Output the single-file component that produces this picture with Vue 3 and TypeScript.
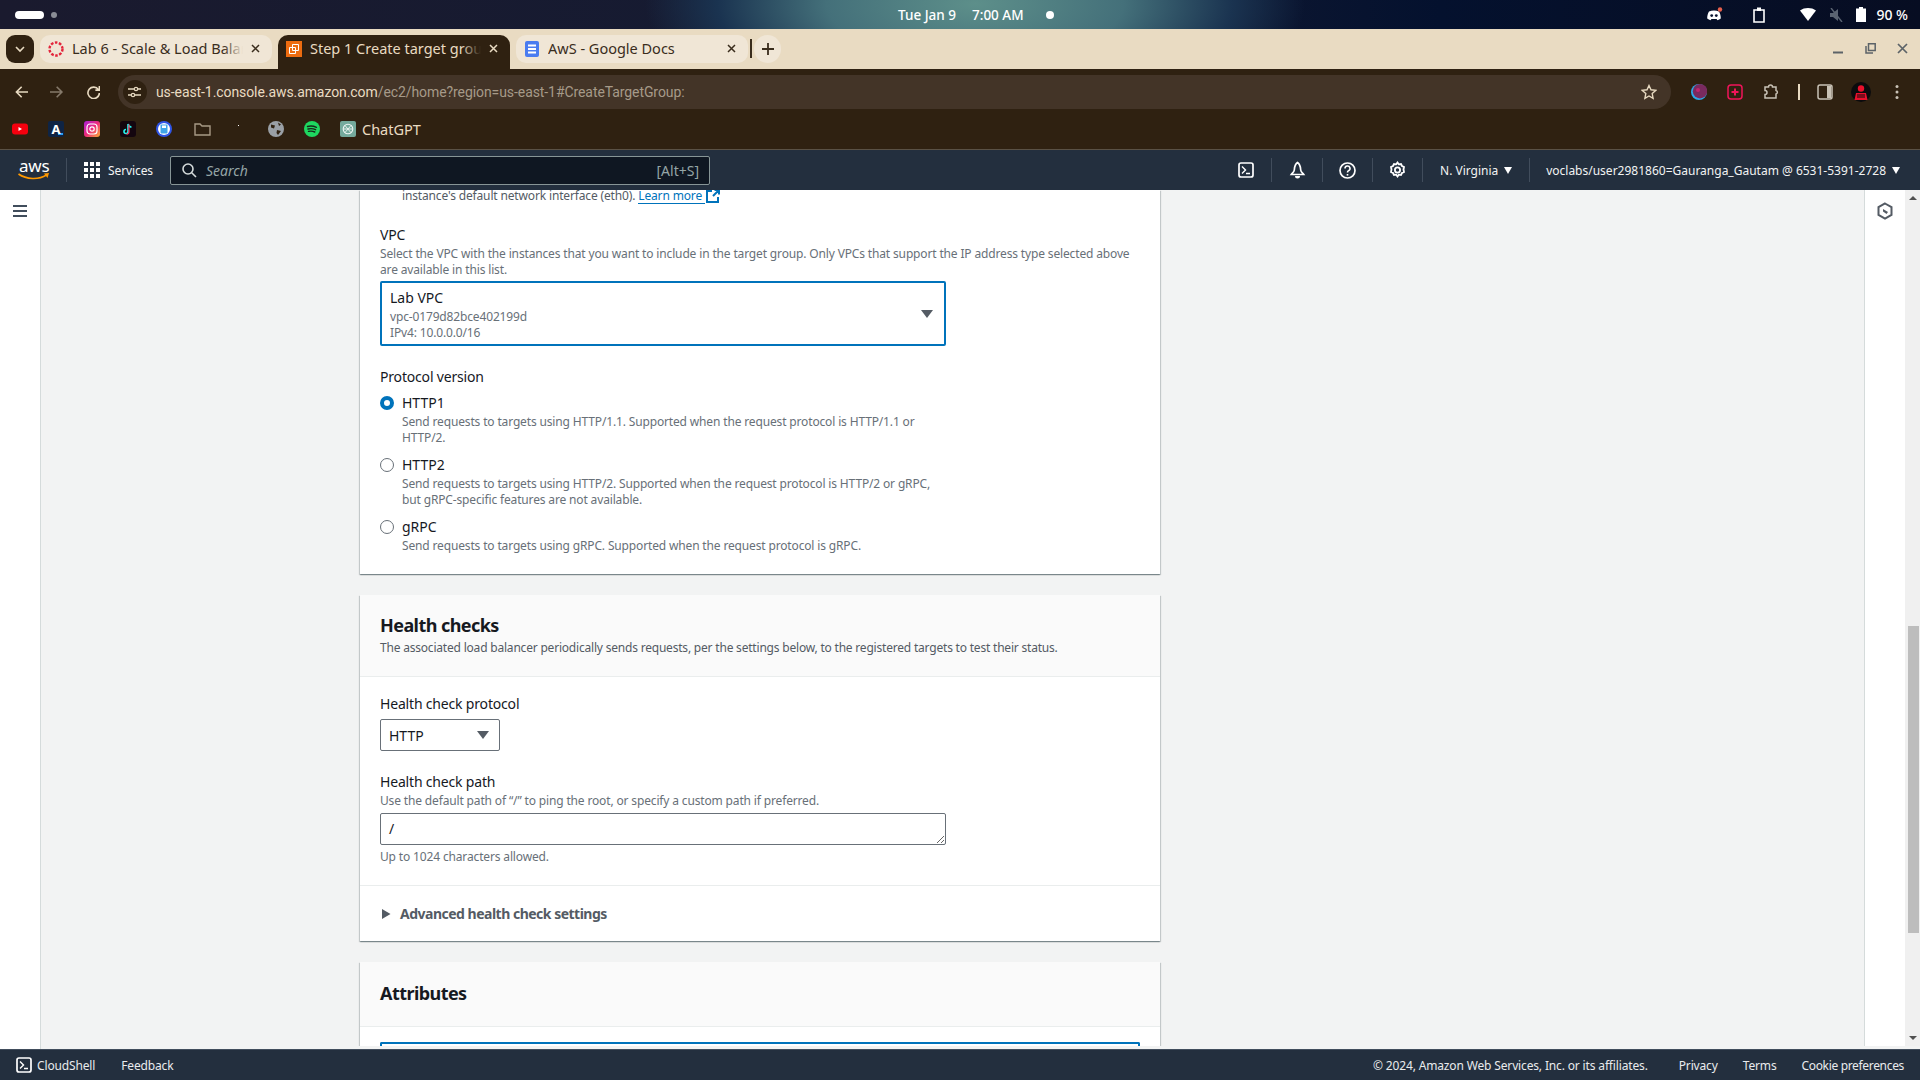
<script setup lang="ts">
const tabs = [
  { title: "Lab 6 - Scale & Load Balancing", icon: "canvas", active: false },
  { title: "Step 1 Create target group", icon: "ec2", active: true },
  { title: "AwS - Google Docs", icon: "docs", active: false },
];

const hints = {
  http1: "Send requests to targets using HTTP/1.1. Supported when the request protocol is HTTP/1.1 or HTTP/2.",
  http2: "Send requests to targets using HTTP/2. Supported when the request protocol is HTTP/2 or gRPC, but gRPC-specific features are not available.",
  grpc: "Send requests to targets using gRPC. Supported when the request protocol is gRPC.",
};

const protocols = [
  { name: "HTTP1", hint: hints.http1, checked: true },
  { name: "HTTP2", hint: hints.http2, checked: false },
  { name: "gRPC", hint: hints.grpc, checked: false },
];
</script>

<template>
  <div class="screen">
    <div class="os-bar">
      <div class="os-left">
        <span class="pill"></span>
        <span class="pill-dot"></span>
      </div>
      <div class="os-clock">
        <span>Tue Jan 9</span>
        <span>7:00 AM</span>
        <span class="clock-dot"></span>
      </div>
      <div class="os-right">
        <svg class="os-discord" width="18" height="16" viewBox="0 0 18 16">
          <path fill="#fff" d="M4 4.500c3-1.300 7-1.300 10 0 1.200 2 1.800 4.400 1.800 7-1 .9-2.200 1.400-3.400 1.700l-.8-1.300H6.400l-.8 1.300C4.400 12.900 3.200 12.400 2.200 11.500c0-2.600.6-5 1.800-7z" />
          <circle cx="6.700" cy="8.600" r="1.400" fill="#0b1430" />
          <circle cx="11.300" cy="8.600" r="1.400" fill="#0b1430" />
          <circle cx="15" cy="2.500" r="2.200" fill="#e8604c" />
        </svg>
        <svg class="os-clip" width="12" height="16" viewBox="0 0 12 16">
          <path fill="none" stroke="#fff" stroke-width="1.600" d="M1 3h10v12H1z" />
          <path fill="#fff" d="M4 .5h4V4H4z" />
        </svg>
        <svg class="os-wifi" width="16" height="13" viewBox="0 0 16 13">
          <path fill="#fff" d="M0 2.500C4.500-.8 11.500-.8 16 2.500L8 13z" />
        </svg>
        <svg class="os-mute" width="16" height="14" viewBox="0 0 16 14">
          <path fill="#5b6472" d="M2 5h3l5-4v12l-5-4H2z" />
          <path stroke="#5b6472" stroke-width="1.400" d="M3 0l11 14" />
        </svg>
        <svg class="os-batt" width="10" height="15" viewBox="0 0 10 15">
          <path fill="#fff" d="M3 0h4v1.500h3V15H0V1.500h3z" />
        </svg>
        <span class="os-pct">90 %</span>
      </div>
    </div>

    <div class="tab-strip">
      <div class="tab-search">
        <svg width="10" height="7" viewBox="0 0 10 7"><path fill="none" stroke="#e8dac1" stroke-width="1.600" d="M1 1l4 4 4-4" /></svg>
      </div>
      <div v-for="tab in tabs" :key="tab.title" class="tab" :class="{ active: tab.active }">
        <svg v-if="tab.icon === 'canvas'" class="favicon" width="16" height="16" viewBox="0 0 16 16">
          <circle cx="8" cy="8" r="6.500" fill="none" stroke="#e3243b" stroke-width="2.400" stroke-dasharray="2.600 1.500" />
        </svg>
        <svg v-else-if="tab.icon === 'ec2'" class="favicon" width="16" height="16" viewBox="0 0 16 16">
          <rect width="16" height="16" fill="#ed6c10" />
          <path fill="none" stroke="#fff" stroke-width="1" d="M6.500 3.500h6v6h-6zM3.500 6.500h6v6h-6z" />
        </svg>
        <svg v-else class="favicon" width="16" height="16" viewBox="0 0 16 16">
          <rect x="1" width="14" height="16" rx="2" fill="#4a7cf0" />
          <path stroke="#fff" stroke-width="1.800" d="M4 4.500h8M4 8h8M4 11.500h8" />
        </svg>
        <span class="tab-title">{{ tab.title }}</span>
        <span class="tab-fade"></span>
        <svg class="tab-close" width="9" height="9" viewBox="0 0 9 9">
          <path stroke="currentColor" stroke-width="1.500" d="M1 1l7 7M8 1L1 8" />
        </svg>
      </div>
      <span class="tab-sep"></span>
      <div class="tab-new">
        <svg width="12" height="12" viewBox="0 0 12 12"><path stroke="#3a2d1d" stroke-width="1.800" d="M6 0v12M0 6h12" /></svg>
      </div>
      <div class="window-btns">
        <svg width="11" height="11" viewBox="0 0 11 11"><path stroke="#5c6368" stroke-width="2" d="M0 9.500h10" /></svg>
        <svg width="11" height="11" viewBox="0 0 11 11"><path fill="none" stroke="#5c6368" stroke-width="1.500" d="M1 3v7h7M3.500.8h6.700v6.700H3.500z" /></svg>
        <svg width="11" height="11" viewBox="0 0 11 11"><path stroke="#5c6368" stroke-width="1.700" d="M1 1l9 9M10 1l-9 9" /></svg>
      </div>
    </div>

    <div class="browser-top">
      <div class="toolbar">
        <svg class="tb-back" width="14" height="14" viewBox="0 0 14 14"><path fill="none" stroke="#e8dac1" stroke-width="1.700" d="M14 7H2M7 1.500L1.500 7 7 12.500" /></svg>
        <svg class="tb-fwd" width="14" height="14" viewBox="0 0 14 14"><path fill="none" stroke="#85796a" stroke-width="1.700" d="M0 7h12M7 1.500L12.500 7 7 12.500" /></svg>
        <svg class="tb-reload" width="14" height="14" viewBox="0 0 14 14"><path fill="none" stroke="#e8dac1" stroke-width="1.700" d="M12 4.500A6 6 0 1 0 13 8M13 .8v4.200H8.800" /></svg>
        <div class="omnibox">
          <span class="site-btn">
            <svg width="13" height="12" viewBox="0 0 13 12">
              <path fill="none" stroke="#e8dac1" stroke-width="1.300" d="M0 3h6M10 3h3M0 9h3M7 9h6" />
              <circle cx="8" cy="3" r="1.700" fill="none" stroke="#e8dac1" stroke-width="1.200" />
              <circle cx="5" cy="9" r="1.700" fill="none" stroke="#e8dac1" stroke-width="1.200" />
            </svg>
          </span>
          <span class="url"><b>us-east-1.console.aws.amazon.com</b>/ec2/home?region=us-east-1#CreateTargetGroup:</span>
          <svg class="star" width="16" height="16" viewBox="0 0 16 16"><path fill="none" stroke="#e8dac1" stroke-width="1.400" d="M8 1.500l2 4.300 4.700.6-3.500 3.200.9 4.700L8 12l-4.100 2.300.9-4.700-3.500-3.200L6 5.800z" /></svg>
        </div>
        <div class="tb-exts">
          <svg width="16" height="16" viewBox="0 0 16 16">
            <circle cx="8" cy="8" r="8" fill="#2ea7e8" />
            <circle cx="9" cy="7.200" r="7.200" fill="#7a2a5f" />
            <circle cx="7" cy="6" r="2" fill="#c0246f" />
          </svg>
          <svg width="16" height="16" viewBox="0 0 16 16">
            <rect x="1" y="1" width="14" height="14" rx="3" fill="none" stroke="#f0145a" stroke-width="1.500" />
            <path stroke="#f0145a" stroke-width="2" d="M8 4.500v7M4.500 8h7" />
          </svg>
          <svg width="16" height="16" viewBox="0 0 16 16">
            <path fill="none" stroke="#c9c2b6" stroke-width="1.500" d="M2 3h3.500a2 2 0 0 1 4 0H13v3.500a1.800 1.800 0 0 1 0 3.500V14H2v-3.500a2 2 0 0 0 0-4z" />
          </svg>
          <span class="ext-sep"></span>
          <svg width="16" height="16" viewBox="0 0 16 16">
            <rect x="1" y="1" width="14" height="14" rx="2" fill="none" stroke="#c9c2b6" stroke-width="1.500" />
            <rect x="10" y="2" width="4" height="12" fill="#c9c2b6" />
          </svg>
          <svg class="avatar" width="20" height="20" viewBox="0 0 20 20">
            <circle cx="10" cy="10" r="10" fill="#0b0b0d" />
            <circle cx="10" cy="6.500" r="3.200" fill="#e8102c" />
            <path fill="#e8102c" d="M5 11h10l1.500 7H3.500z" />
            <path stroke="#0b0b0d" d="M6 13h8M6 15h8" />
          </svg>
          <svg width="16" height="16" viewBox="0 0 16 16">
            <circle cx="8" cy="2.500" r="1.500" fill="#c9c2b6" />
            <circle cx="8" cy="8" r="1.500" fill="#c9c2b6" />
            <circle cx="8" cy="13.500" r="1.500" fill="#c9c2b6" />
          </svg>
        </div>
      </div>
      <div class="bookmarks">
        <svg width="16" height="12" viewBox="0 0 16 12">
          <rect width="16" height="11" y=".5" rx="3" fill="#f5000e" />
          <path fill="#fff" d="M6.500 4l3.500 2-3.500 2z" />
        </svg>
        <span class="bm-a">A</span>
        <svg width="16" height="16" viewBox="0 0 16 16">
          <defs>
            <linearGradient id="ig" x1="0" y1="0" x2="1" y2="1">
              <stop offset="0" stop-color="#a81fd8" />
              <stop offset=".5" stop-color="#ee2a7b" />
              <stop offset="1" stop-color="#fbb034" />
            </linearGradient>
          </defs>
          <rect width="16" height="16" rx="3" fill="url(#ig)" />
          <rect x="3" y="3" width="10" height="10" rx="3" fill="none" stroke="#fff" stroke-width="1.200" />
          <circle cx="8" cy="8" r="2.200" fill="none" stroke="#fff" stroke-width="1.200" />
        </svg>
        <svg width="16" height="16" viewBox="0 0 16 16">
          <rect width="16" height="16" rx="3" fill="#14060f" />
          <path fill="none" stroke="#25f4ee" stroke-width="1.600" d="M8 3v7.500a2 2 0 1 1-2-2M8 3c.3 1.800 1.500 3 3.500 3" />
          <path fill="none" stroke="#fe2c55" stroke-width="1.200" d="M9 3.500v7.500a2 2 0 0 1-2.500 2" />
        </svg>
        <svg width="16" height="16" viewBox="0 0 16 16">
          <circle cx="8" cy="8" r="8" fill="#2f55e8" />
          <circle cx="8" cy="8" r="6" fill="#fff" />
          <rect x="4.500" y="3.500" width="7" height="9" rx="1" fill="#3fa5ea" />
          <rect x="6" y="4.500" width="4" height="2.500" fill="#fff" />
        </svg>
        <svg class="bm-folder" width="17" height="14" viewBox="0 0 17 14">
          <path fill="none" stroke="#a89a85" stroke-width="1.400" d="M1 2h5l2 2h8v9H1z" />
        </svg>
        <span class="bm-dot"></span>
        <svg class="bm-globe" width="16" height="16" viewBox="0 0 16 16">
          <circle cx="8" cy="8" r="8" fill="#9aa0a6" />
          <path fill="#2f2111" d="M3 3.500l4 1-1 3-3-1zM9 9l4 1-3 4-1.500-2zM10 1.500l3 2-2 1.500z" />
        </svg>
        <svg width="16" height="16" viewBox="0 0 16 16">
          <circle cx="8" cy="8" r="8" fill="#1ed760" />
          <path fill="none" stroke="#17281a" stroke-width="1.400" stroke-linecap="round" d="M3.500 5.500c3-.9 6-.6 9 .8M4 8c2.600-.7 5.200-.5 7.600.7M4.500 10.400c2.200-.5 4.300-.4 6.300.6" />
        </svg>
        <span class="bm-chat">
          <svg width="16" height="16" viewBox="0 0 16 16">
            <rect width="16" height="16" rx="2" fill="#74aa9c" />
            <circle cx="8" cy="8" r="4.800" fill="none" stroke="#eef5f2" stroke-width="1.100" />
            <path fill="none" stroke="#eef5f2" stroke-width=".9" d="M5 4.500l5.800 7M11 4.500L5 11.500M3.500 8h9" />
          </svg>
          ChatGPT
        </span>
      </div>
    </div>

    <div class="aws-nav">
      <div class="aws-logo">
        <span>aws</span>
        <svg width="32" height="8" viewBox="0 0 32 8">
          <path fill="none" stroke="#f90" stroke-width="1.600" d="M.5 1c8 5.500 20 6 28 1" />
          <path fill="#f90" d="M26 .5l5-.5-1.500 5z" />
        </svg>
      </div>
      <span class="nav-grid">
        <i v-for="n in 9" :key="n"></i>
      </span>
      <span class="nav-services">Services</span>
      <div class="nav-search">
        <svg width="15" height="15" viewBox="0 0 15 15"><path fill="none" stroke="#d5dbdb" stroke-width="1.600" d="M9.700 9.700L14 14M11 6a5 5 0 1 1-10 0 5 5 0 0 1 10 0z" /></svg>
        <em>Search</em>
        <span>[Alt+S]</span>
      </div>
      <div class="nav-right">
        <span class="nav-item first">
          <svg width="16" height="16" viewBox="0 0 16 16">
            <rect x="1" y="1" width="14" height="14" rx="2" fill="none" stroke="#fff" stroke-width="1.700" />
            <path fill="none" stroke="#fff" stroke-width="1.400" d="M4 4.500L7.500 8 4 11.500M8 11.500h4" />
          </svg>
        </span>
        <span class="nav-item wide">
          <svg width="17" height="18" viewBox="0 0 17 18">
            <path fill="none" stroke="#fff" stroke-width="1.700" d="M8.500 1.500c-3 2-3 5-3.200 7.500-.2 2-2 3-3 4.500h12.400c-1-1.500-2.800-2.500-3-4.500-.2-2.500-.2-5.500-3.200-7.500z" />
            <path fill="#fff" d="M6 15h5a2.500 2.500 0 0 1-5 0z" />
          </svg>
        </span>
        <span class="nav-item">
          <svg width="17" height="17" viewBox="0 0 17 17">
            <circle cx="8.500" cy="8.500" r="7.500" fill="none" stroke="#fff" stroke-width="1.700" />
            <path fill="none" stroke="#fff" stroke-width="1.600" d="M6 6.500a2.500 2.500 0 1 1 3.500 2.300c-.7.3-1 .8-1 1.700" />
            <path stroke="#fff" stroke-width="1.600" d="M8.500 12v1.600" />
          </svg>
        </span>
        <span class="nav-item wide2">
          <svg width="17" height="18" viewBox="0 0 17 18">
            <path fill="none" stroke="#fff" stroke-width="1.800" d="M8.500 1.500l1.300 1.800 2.200-.3 1 2 2 1-.5 2.500.5 2.500-2 1-1 2-2.200-.3-1.300 1.800-1.300-1.800-2.200.3-1-2-2-1 .5-2.500-.5-2.500 2-1 1-2 2.200.3z" />
            <circle cx="8.500" cy="9" r="2.600" fill="none" stroke="#fff" stroke-width="1.800" />
          </svg>
        </span>
        <span class="nav-item region">N. Virginia <i class="nav-caret"></i></span>
        <span class="nav-account">voclabs/user2981860=Gauranga_Gautam @ 6531-5391-2728 <i class="nav-caret"></i></span>
      </div>
    </div>

    <div class="body-row">
      <aside class="left-rail">
        <svg width="14" height="12" viewBox="0 0 14 12"><path stroke="#414d5c" stroke-width="2" d="M0 1h14M0 6h14M0 11h14" /></svg>
      </aside>
      <div class="body-col">
        <div class="scroll-row">
          <main class="page">
            <section class="card first-card">
              <div class="card-body">
                <p class="hint indent">instance's default network interface (eth0). <a class="learn">Learn more</a>
                  <svg class="ext" width="14" height="14" viewBox="0 0 14 14"><path fill="none" stroke="#0073bb" stroke-width="2" d="M6 2H1v11h11V8M7 7l5.500-5.500M8.500 1H13v4.500" /></svg>
                </p>
                <div class="label vpc-label">VPC</div>
                <p class="hint">Select the VPC with the instances that you want to include in the target group. Only VPCs that support the IP address type selected above are available in this list.</p>
                <div class="vpc-select">
                  <div>
                    <div class="vpc-name">Lab VPC</div>
                    <div class="hint">vpc-0179d82bce402199d</div>
                    <div class="hint">IPv4: 10.0.0.0/16</div>
                  </div>
                  <i class="caret"></i>
                </div>
                <div class="label proto-label">Protocol version</div>
                <div v-for="p in protocols" :key="p.name" class="radio">
                  <span class="radio-dot" :class="{ checked: p.checked }"></span>
                  <div class="radio-text">
                    <div class="radio-name">{{ p.name }}</div>
                    <p class="hint radio-hint">{{ p.hint }}</p>
                  </div>
                </div>
              </div>
            </section>

            <section class="card">
              <header class="card-head">
                <h2>Health checks</h2>
                <p>The associated load balancer periodically sends requests, per the settings below, to the registered targets to test their status.</p>
              </header>
              <div class="card-body health-body">
                <div class="label">Health check protocol</div>
                <div class="proto-select">HTTP <i class="caret"></i></div>
                <div class="label path-label">Health check path</div>
                <p class="hint">Use the default path of “/” to ping the root, or specify a custom path if preferred.</p>
                <textarea class="path-input" rows="1">/</textarea>
                <p class="hint path-note">Up to 1024 characters allowed.</p>
              </div>
              <div class="advanced">
                <svg width="9" height="10" viewBox="0 0 9 10"><path fill="#545b64" d="M0 0l8.500 5L0 10z" /></svg>
                Advanced health check settings
              </div>
            </section>

            <section class="card">
              <header class="card-head attr-head">
                <h2>Attributes</h2>
              </header>
              <div class="attr-body">
                <div class="attr-box"></div>
              </div>
            </section>
          </main>
          <aside class="right-rail">
            <svg width="16" height="18" viewBox="0 0 16 18">
              <path fill="none" stroke="#545b64" stroke-width="2" d="M8 1.500l6.500 3.700v7.600L8 16.500l-6.500-3.700V5.200z" />
              <path fill="#545b64" d="M6 7l5 3-1.500 2L6 9.500z" />
            </svg>
          </aside>
          <div class="scrollbar">
            <i class="sb-up"></i>
            <span class="sb-thumb"></span>
            <i class="sb-down"></i>
          </div>
        </div>
      </div>
    </div>

    <footer class="foot">
      <svg width="16" height="16" viewBox="0 0 16 16">
        <rect x="1" y="1" width="14" height="14" rx="2" fill="none" stroke="#fff" stroke-width="1.700" />
        <path fill="none" stroke="#fff" stroke-width="1.400" d="M4 4.500L7.500 8 4 11.500M8 11.500h4" />
      </svg>
      <span class="foot-shell">CloudShell</span>
      <span class="foot-feedback">Feedback</span>
      <span class="foot-copy">© 2024, Amazon Web Services, Inc. or its affiliates.</span>
      <span class="foot-link">Privacy</span>
      <span class="foot-link">Terms</span>
      <span class="foot-link foot-cookie">Cookie preferences</span>
    </footer>
  </div>
</template>

<style>
html,
body {
  margin: 0;
  overflow: hidden;
}
</style>

<style scoped>
.screen {
  width: 1920px;
  height: 1080px;
  display: flex;
  flex-direction: column;
  overflow: hidden;
  font-family: "Noto Sans", sans-serif;
  font-size: 14px;
  color: #16191f;
}

.os-bar {
  height: 29px;
  flex: none;
  display: flex;
  align-items: center;
  color: #fff;
  background: radial-gradient(ellipse 330px 130px at 975px 4px, #5d8f8a 0%, #44707a 45%, #1a3350 78%, transparent 100%),
    linear-gradient(90deg, #1a1a2e 0%, #141b33 55%, #04112e 75%, #070d22 100%);
}

.os-left {
  width: 898px;
  display: flex;
  align-items: center;
  padding-left: 15px;
  box-sizing: border-box;
}

.pill {
  width: 29px;
  height: 8px;
  border-radius: 4px;
  background: #fff;
}

.pill-dot {
  width: 6px;
  height: 6px;
  margin-left: 7px;
  border-radius: 50%;
  background: #8a8d96;
}

.os-clock {
  display: flex;
  align-items: center;
  gap: 16px;
  font-size: 13.500px;
  font-weight: 500;
}

.clock-dot {
  width: 8px;
  height: 8px;
  margin-left: 6px;
  border-radius: 50%;
  background: #fff;
}

.os-right {
  margin-left: auto;
  padding-right: 12px;
  display: flex;
  align-items: center;
}

.os-clip {
  margin-left: 30px;
}

.os-wifi {
  margin-left: 35px;
}

.os-mute {
  margin-left: 12px;
}

.os-batt {
  margin-left: 12px;
}

.os-pct {
  margin-left: 10px;
  font-size: 14px;
  font-weight: 500;
}

.tab-strip {
  height: 40px;
  flex: none;
  display: flex;
  align-items: flex-start;
  padding: 6px 0 0 6px;
  box-sizing: border-box;
  background: #e9dbc2;
}

.tab-search {
  width: 28px;
  height: 28px;
  display: flex;
  align-items: center;
  justify-content: center;
  border-radius: 9px;
  background: #2f2111;
}

.tab {
  position: relative;
  width: 232px;
  height: 28px;
  margin-left: 6px;
  display: flex;
  align-items: center;
  padding: 0 10px 1px 8px;
  box-sizing: border-box;
  border-radius: 10px;
  color: #3a2d1d;
  background: #f0e6d6;
}

.tab.active {
  height: 34px;
  padding-bottom: 7px;
  border-radius: 10px 10px 0 0;
  color: #e9dbc2;
  background: #2f2111;
}

.favicon {
  flex: none;
}

.tab-title {
  margin: 0 0 2px 8px;
  flex: 1;
  overflow: hidden;
  white-space: nowrap;
  font-size: 14.500px;
}

.tab-fade {
  width: 20px;
  height: 20px;
  margin-left: -20px;
  flex: none;
  background: linear-gradient(90deg, rgba(240, 230, 214, 0), #f0e6d6);
}

.tab.active .tab-fade {
  background: linear-gradient(90deg, rgba(47, 33, 17, 0), #2f2111);
}

.tab-close {
  flex: none;
  margin-left: 8px;
  margin-right: 2px;
}

.tab-sep {
  width: 2px;
  height: 19px;
  margin: 4px 0 0 2px;
  background: #3a2d1d;
}

.tab-new {
  width: 27px;
  height: 28px;
  margin-left: 2px;
  display: flex;
  align-items: center;
  justify-content: center;
  border-radius: 50%;
  background: #f0e6d6;
}

.window-btns {
  margin-left: auto;
  padding: 8px 12px 0 0;
  display: flex;
  gap: 21px;
}

.browser-top {
  height: 80px;
  flex: none;
  display: flex;
  flex-direction: column;
  background: #2f2111;
}

.toolbar {
  height: 46px;
  display: flex;
  align-items: center;
  padding: 6px 15px;
  box-sizing: border-box;
  flex: none;
}

.tb-fwd {
  margin-left: 22px;
}

.tb-reload {
  margin-left: 23px;
}

.omnibox {
  width: 1553px;
  height: 34px;
  margin-left: 18px;
  flex: none;
  display: flex;
  align-items: center;
  padding: 0 14px 0 5px;
  box-sizing: border-box;
  border-radius: 17px;
  background: #433427;
}

.site-btn {
  width: 24px;
  height: 24px;
  flex: none;
  display: flex;
  align-items: center;
  justify-content: center;
  border-radius: 50%;
  background: #2f2111;
}

.url {
  margin-left: 9px;
  font-family: Roboto, sans-serif;
  font-size: 14px;
  letter-spacing: -.08px;
  color: #a69a89;
  white-space: nowrap;
}

.url b {
  font-weight: 400;
  color: #e9dbc2;
}

.star {
  margin-left: auto;
}

.tb-exts {
  margin-left: 20px;
  flex: 1;
  display: flex;
  align-items: center;
  gap: 20px;
}

.ext-sep {
  width: 2px;
  height: 16px;
  margin: 0 -3px 0 -1px;
  background: #e9dbc2;
}

.avatar {
  margin: 0 -2px;
}

.bookmarks {
  height: 27px;
  display: flex;
  align-items: center;
  gap: 20px;
  padding-left: 12px;
}

.bm-a {
  width: 16px;
  height: 16px;
  font-size: 13px;
  line-height: 16px;
  text-align: center;
  font-weight: 700;
  color: #fff;
  border-radius: 2px;
  background: linear-gradient(#2a9df4, #2a9df4) right 1px bottom 2px / 5px 2px no-repeat, #0f2444;
}

.bm-folder {
  margin-left: 2px;
}

.bm-dot {
  width: 1px;
  height: 1px;
  background: #fff;
  margin: 0 11px 6px 7px;
}

.bm-globe {
  margin-left: -2px;
}

.bm-chat {
  display: flex;
  align-items: center;
  gap: 6px;
  font-size: 14.500px;
  color: #e9dbc2;
}

.aws-nav {
  height: 41px;
  flex: none;
  display: flex;
  align-items: center;
  box-sizing: border-box;
  border-top: 1px solid #5a5145;
  background: #232f3e;
  color: #f2f3f3;
  font-size: 12px;
}

.aws-logo {
  width: 32px;
  height: 24px;
  margin-left: 18px;
  padding-right: 16px;
  flex: none;
  box-sizing: content-box;
  border-right: 1px solid #414d5c;
  color: #fff;
  font-size: 17px;
  line-height: 15px;
  font-weight: 400;
}

.aws-logo span {
  display: block;
  padding-left: 1px;
  letter-spacing: -.2px;
}

.aws-logo svg {
  display: block;
}

.nav-grid {
  width: 16px;
  margin-left: 17px;
  flex: none;
  display: grid;
  grid-template-columns: repeat(3, 4px);
  gap: 2px;
}

.nav-grid i {
  height: 4px;
  background: #fff;
}

.nav-services {
  width: 45px;
  margin-left: 8px;
  letter-spacing: -.1px;
  white-space: nowrap;
}

.nav-search {
  width: 540px;
  height: 29px;
  margin-left: 17px;
  display: flex;
  align-items: center;
  padding: 0 10px 0 11px;
  box-sizing: border-box;
  border: 1px solid #879596;
  border-radius: 2px;
  background: #0f1722;
  color: #95a5a6;
}

.nav-search em {
  margin-left: 9px;
  font-size: 14px;
}

.nav-search span {
  margin-left: auto;
  font-size: 14px;
}

.nav-right {
  margin-left: auto;
  display: flex;
  align-items: center;
}

.nav-item {
  width: 49px;
  height: 24px;
  display: flex;
  align-items: center;
  justify-content: center;
  border-right: 1px solid #414d5c;
}

.nav-item.first {
  width: 50px;
}

.nav-item.wide {
  width: 50px;
}

.nav-item.wide2 {
  width: 49px;
}

.nav-item.region {
  width: 106px;
  gap: 6px;
}

.nav-account {
  padding: 0 20px 0 16px;
  display: flex;
  align-items: center;
  gap: 6px;
}

.nav-caret {
  width: 0;
  height: 0;
  border: 4px solid transparent;
  border-top: 7px solid #fff;
  border-bottom: 0;
}

.body-row {
  flex: 1;
  min-height: 0;
  display: flex;
}

.left-rail {
  width: 41px;
  flex: none;
  box-sizing: border-box;
  padding: 15px 0 0 13px;
  border-right: 1px solid #d5dbdb;
  background: #fff;
}

.left-rail svg {
  display: block;
}

.body-col {
  flex: 1;
  min-width: 0;
  background: #f2f3f3;
}

.scroll-row {
  height: 856px;
  display: flex;
}

.page {
  flex: 1;
  min-width: 0;
  overflow: hidden;
  padding-left: 319px;
  display: flex;
  flex-direction: column;
  align-items: flex-start;
}

.card {
  width: 800px;
  flex: none;
  margin-bottom: 21px;
  background: #fff;
  box-shadow: 0 1px 1px 0 rgba(0, 28, 36, .3), 1px 1px 1px 0 rgba(0, 28, 36, .15), -1px 1px 1px 0 rgba(0, 28, 36, .15);
}

.card-body {
  padding: 0 20px 20px;
}

.first-card .card-body {
  margin-top: -2px;
}

.hint {
  margin: 0;
  font-size: 12px;
  line-height: 16px;
  letter-spacing: -.15px;
  color: #687078;
}

.indent {
  padding-left: 22px;
  color: #545b64;
  display: flex;
  white-space: pre;
}

.learn {
  height: 16px;
  box-sizing: border-box;
  color: #0073bb;
  border-bottom: 1px solid #0073bb;
  padding-right: 3px;
}

.ext {
  margin-left: 1px;
  margin-top: 1px;
}

.label {
  font-size: 14px;
  line-height: 22px;
  letter-spacing: -.18px;
}

.vpc-label,
.proto-label {
  margin-top: 20px;
}

.vpc-select {
  width: 566px;
  height: 65px;
  margin-top: 3px;
  display: flex;
  align-items: center;
  justify-content: space-between;
  padding: 0 11px 0 8px;
  box-sizing: border-box;
  border: 2px solid #0073bb;
  border-radius: 2px;
}

.vpc-name {
  line-height: 22px;
  margin-top: 1px;
}

.caret {
  width: 0;
  height: 0;
  flex: none;
  border: 6px solid transparent;
  border-top: 8px solid #545b64;
  border-bottom: 0;
}

.radio {
  display: flex;
  margin-bottom: 8px;
}

.proto-label + .radio {
  margin-top: 4px;
}

.radio:last-child {
  margin-bottom: 0;
}

.radio-dot {
  width: 14px;
  height: 14px;
  margin-top: 4px;
  flex: none;
  box-sizing: border-box;
  border: 1px solid #687078;
  border-radius: 50%;
}

.radio-dot.checked {
  border: 4.500px solid #0073bb;
}

.radio-text {
  margin-left: 8px;
  width: 544px;
}

.radio-name {
  line-height: 22px;
}

.card-head {
  padding: 19px 20px 20px;
  border-bottom: 1px solid #eaeded;
  background: #fafafa;
}

.card-head h2 {
  margin: 0;
  font-size: 18px;
  line-height: 22px;
  font-weight: 700;
  letter-spacing: -.56px;
}

.card-head p {
  margin: 4px 0 0;
  font-size: 12px;
  line-height: 16px;
  letter-spacing: -.2px;
  color: #545b64;
}

.health-body {
  padding-top: 16px;
  border-bottom: 1px solid #eaeded;
}

.proto-select {
  width: 120px;
  height: 32px;
  margin-top: 4px;
  display: flex;
  align-items: center;
  justify-content: space-between;
  padding: 0 10px 0 8px;
  box-sizing: border-box;
  border: 1px solid #687078;
  border-radius: 2px;
}

.path-label {
  margin-top: 20px;
}

.path-input {
  display: block;
  width: 566px;
  height: 32px;
  margin-top: 4px;
  padding: 4px 8px;
  box-sizing: border-box;
  border: 1px solid #687078;
  border-radius: 2px;
  outline: none;
  font-family: inherit;
  font-size: 14px;
  line-height: 22px;
  color: #16191f;
}

.path-note {
  margin-top: 4px;
}

.advanced {
  height: 55px;
  display: flex;
  align-items: center;
  gap: 9px;
  padding-left: 22px;
  font-size: 14px;
  font-weight: 700;
  letter-spacing: -.5px;
  color: #545b64;
}

.attr-head {
  height: 65px;
  padding-top: 20px;
  box-sizing: border-box;
}

.attr-body {
  padding: 15px 20px 0;
}

.attr-box {
  height: 80px;
  border: 2px solid #0073bb;
  border-bottom: 0;
  border-radius: 2px 2px 0 0;
}

.right-rail {
  width: 41px;
  flex: none;
  box-sizing: border-box;
  padding: 12px 0 0 12px;
  border-left: 1px solid #d5dbdb;
  background: #fff;
}

.scrollbar {
  width: 15px;
  flex: none;
  box-sizing: border-box;
  display: flex;
  flex-direction: column;
  align-items: center;
  padding-top: 6px;
  background: #f0f0f0;
}

.sb-up {
  width: 0;
  height: 0;
  border: 4px solid transparent;
  border-bottom: 4px solid #505050;
  border-top: 0;
}

.sb-down {
  width: 0;
  height: 0;
  margin-top: auto;
  margin-bottom: 6px;
  border: 4px solid transparent;
  border-top: 4px solid #505050;
  border-bottom: 0;
}

.sb-thumb {
  width: 11px;
  height: 307px;
  margin-top: 426px;
  margin-left: 1px;
  background: #bdbdbd;
}

.foot {
  height: 31px;
  flex: none;
  display: flex;
  align-items: center;
  padding: 0 16px;
  box-sizing: border-box;
  border-top: 1px solid #414d5c;
  background: #232f3e;
  color: #e9ebed;
  font-size: 12px;
  letter-spacing: -.15px;
}

.foot-shell {
  margin-left: 5px;
}

.foot-feedback {
  margin-left: 26px;
}

.foot-copy {
  margin-left: auto;
  margin-right: 31px;
}

.foot-link + .foot-link {
  margin-left: 25px;
}

.foot-cookie {
  letter-spacing: -.33px;
}
</style>
